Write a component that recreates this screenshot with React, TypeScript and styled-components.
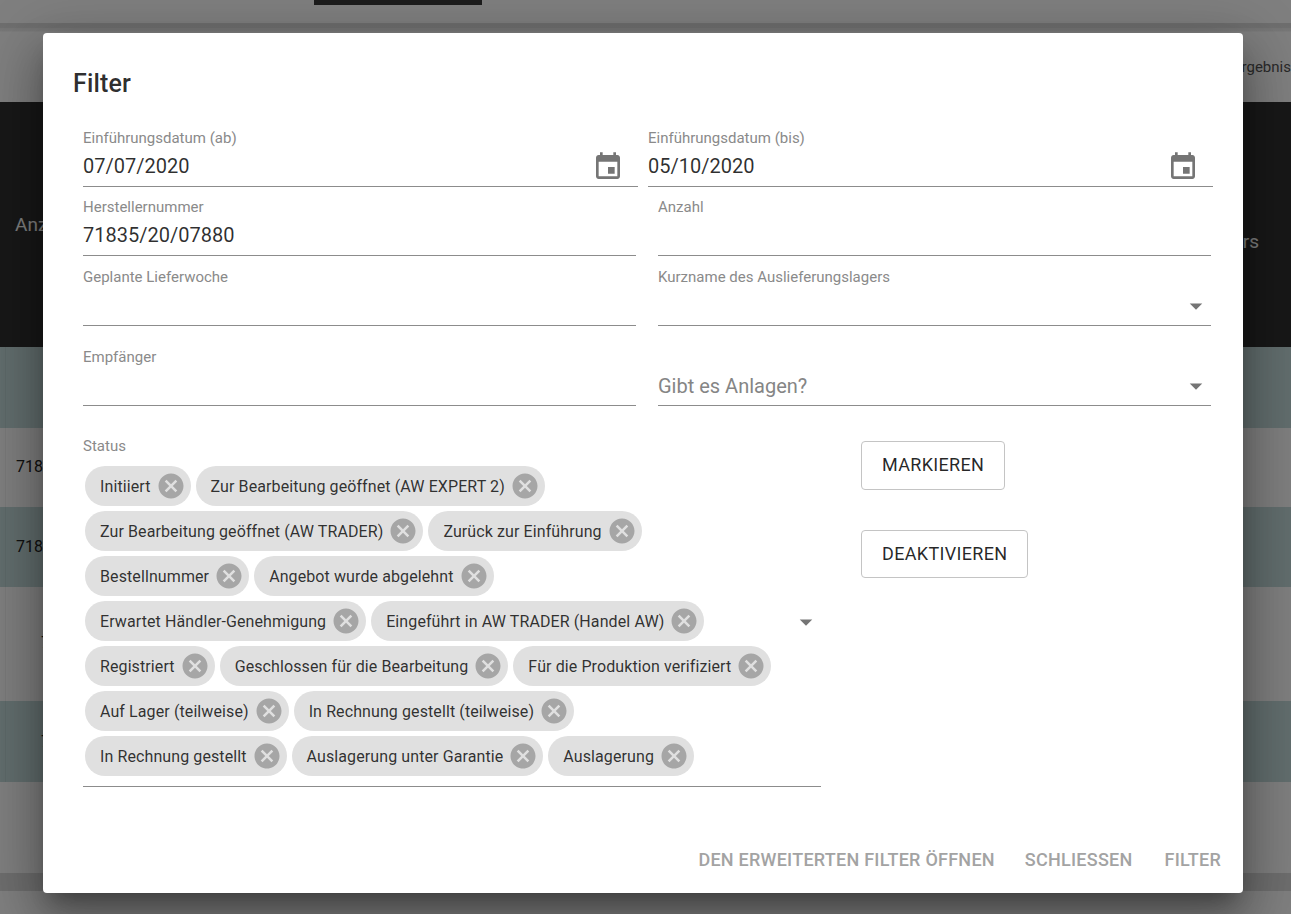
import React from "react";
import styled, { createGlobalStyle } from "styled-components";

const Global = createGlobalStyle`
  html, body { margin: 0; padding: 0; height: 914px; overflow: hidden; background: #fff; }
  * { box-sizing: border-box; }
  body { font-family: Roboto, "Liberation Sans", sans-serif; }
`;

const Page = styled.div`
  position: relative;
  width: 1291px;
  height: 914px;
  overflow: hidden;
  display: flex;
  flex-direction: column;
  background: #fff;
`;
const TopBar = styled.div`
  height: 23px;
  padding-left: 314px;
  background: #fff;
`;
const ActiveTab = styled.div`
  width: 168px;
  height: 5px;
  background: #383838;
`;
const Divider = styled.div`
  height: 9px;
  background: linear-gradient(#dcdcdc 0, #dedede 5px, #eaeaea 5px, #eeeeee 8px, #fff 9px);
`;
const ResultBar = styled.div`
  height: 70px;
  display: flex;
  align-items: center;
  padding: 0 0 0 1233px;
  overflow: hidden;
  font-size: 15px;
  color: #555;
  white-space: nowrap;
`;
const TableHead = styled.div`
  height: 245px;
  background: #303030;
  color: #fff;
  font-size: 19px;
  display: flex;
  justify-content: space-between;
  padding: 0 32px 0 15px;
`;
const HeadCell = styled.div<{ $top: number }>`
  padding-top: ${(p) => p.$top}px;
  white-space: nowrap;
`;
const TableRow = styled.div<{ $h: number; $tint?: boolean }>`
  height: ${(p) => p.$h}px;
  background: ${(p) => (p.$tint ? "#c4dcdd" : "#fff")};
  padding-left: 5px;
`;
const RowCell = styled.div<{ $indent: number; $lift: number }>`
  height: 100%;
  display: flex;
  align-items: center;
  padding: 0 0 ${(p) => p.$lift}px ${(p) => p.$indent}px;
  font-size: 16px;
  color: #222;
  border-left: 1px solid rgba(0, 0, 0, 0.05);
  white-space: nowrap;
`;
const RowFill = styled.div`
  height: 91px;
  background: #fff;
`;
const PageFooter = styled.div`
  height: 18px;
  background: #dcdcdc;
`;
const PageEnd = styled.div`
  flex: 1;
  background: #fff;
`;

const Backdrop = styled.div`
  position: absolute;
  inset: 0;
  background: rgba(0, 0, 0, 0.5);
  padding: 33px 0 0 43px;
`;
const Dialog = styled.div`
  width: 1200px;
  height: 860px;
  background: #fff;
  border-radius: 4px;
  display: flex;
  flex-direction: column;
  box-shadow: 0 14px 19px -9px rgba(0, 0, 0, 0.3), 0 30px 48px 4px rgba(0, 0, 0, 0.22),
    0 11px 58px 10px rgba(0, 0, 0, 0.18);
`;
const Title = styled.h2`
  margin: 0;
  padding: 35px 0 0 30px;
  height: 97px;
  font-size: 25px;
  line-height: 32px;
  letter-spacing: 0.15px;
  font-weight: 500;
  color: rgba(0, 0, 0, 0.82);
`;
const Form = styled.div`
  padding-left: 40px;
`;
const FormRow = styled.div<{ $cols: string; $gap: number; $top: number }>`
  display: grid;
  grid-template-columns: ${(p) => p.$cols};
  column-gap: ${(p) => p.$gap}px;
  margin-top: ${(p) => p.$top}px;
`;
const Field = styled.div`
  height: 57px;
  display: flex;
  flex-direction: column;
`;
const Label = styled.label`
  font-size: 15px;
  line-height: 16px;
  color: #8a8a8a;
`;
const InputLine = styled.div`
  margin-top: auto;
  height: 41px;
  border-bottom: 1px solid #8c8c8c;
  display: flex;
  align-items: center;
  justify-content: space-between;
`;
const Value = styled.span`
  font-size: 20px;
  color: rgba(0, 0, 0, 0.82);
`;
const Placeholder = styled.span`
  margin-top: 2px;
  font-size: 20px;
  color: #858585;
`;
const IconSlot = styled.span<{ $right: number }>`
  display: flex;
  margin: 2px ${(p) => p.$right}px 0 0;
  color: #757575;
`;

const StatusRow = styled.div`
  display: flex;
  gap: 40px;
  margin-top: 30px;
`;
const StatusField = styled.div`
  position: relative;
  width: 738px;
  height: 351px;
  border-bottom: 1px solid #8c8c8c;
`;
const ChipList = styled.div`
  margin-top: 11px;
  padding-left: 2px;
  width: 693px;
  display: flex;
  flex-wrap: wrap;
  gap: 5px;
`;
const Chip = styled.div`
  height: 40px;
  border-radius: 20px;
  background: #e0e0e0;
  display: flex;
  align-items: center;
  padding-left: 15px;
  padding-right: 5px;
  font-size: 16px;
  letter-spacing: 0.1px;
  color: rgba(0, 0, 0, 0.8);
  white-space: nowrap;
`;
const ChipRemove = styled.svg`
  width: 30px;
  height: 30px;
  margin-left: 5px;
  fill: #a6a6a6;
`;
const StatusArrow = styled.span`
  position: absolute;
  right: 0;
  top: 171px;
  display: flex;
  color: #757575;
`;
const ActionColumn = styled.div`
  display: flex;
  flex-direction: column;
  align-items: flex-start;
  gap: 40px;
  padding-top: 5px;
`;
const OutlineButton = styled.button<{ $h: number }>`
  height: ${(p) => p.$h}px;
  padding: 0 20px 2px;
  background: #fff;
  border: 1px solid #c4c4c4;
  border-radius: 4px;
  font-family: inherit;
  font-size: 18px;
  font-weight: 400;
  letter-spacing: 0.33px;
  color: rgba(0, 0, 0, 0.85);
`;
const Footer = styled.div`
  margin-top: auto;
  height: 44px;
  padding: 0 22px 0 0;
  display: flex;
  justify-content: flex-end;
  align-items: flex-start;
`;
const FooterButton = styled.span<{ $left: number }>`
  margin-left: ${(p) => p.$left}px;
  font-size: 18px;
  line-height: 22px;
  letter-spacing: 0.25px;
  font-weight: 500;
  color: #a3a3a3;
  white-space: nowrap;
`;

const CalendarIcon = () => (
  <svg width="32" height="32" viewBox="0 0 24 24" fill="currentColor">
    <path d="M17 12h-5v5h5v-5zM16 1v2H8V1H6v2H5c-1.11 0-1.99.9-1.99 2L3 19c0 1.1.89 2 2 2h14c1.1 0 2-.9 2-2V5c0-1.1-.9-2-2-2h-1V1h-2zm3 18H5V8h14v11z" />
  </svg>
);
const ArrowIcon = () => (
  <svg width="30" height="30" viewBox="0 0 24 24" fill="currentColor">
    <path d="M7 10l5 5 5-5z" />
  </svg>
);

const statuses = [
  "Initiiert",
  "Zur Bearbeitung geöffnet (AW EXPERT 2)",
  "Zur Bearbeitung geöffnet (AW TRADER)",
  "Zurück zur Einführung",
  "Bestellnummer",
  "Angebot wurde abgelehnt",
  "Erwartet Händler-Genehmigung",
  "Eingeführt in AW TRADER (Handel AW)",
  "Registriert",
  "Geschlossen für die Bearbeitung",
  "Für die Produktion verifiziert",
  "Auf Lager (teilweise)",
  "In Rechnung gestellt (teilweise)",
  "In Rechnung gestellt",
  "Auslagerung unter Garantie",
  "Auslagerung",
];

export default function App() {
  return (
    <Page>
      <Global />
      <TopBar>
        <ActiveTab />
      </TopBar>
      <Divider />
      <ResultBar>Ergebnisse</ResultBar>
      <TableHead>
        <HeadCell $top={111}>Anzahl</HeadCell>
        <HeadCell $top={128}>Lagers</HeadCell>
      </TableHead>
      <TableRow $h={81} $tint><RowCell $indent={10} $lift={0} /></TableRow>
      <TableRow $h={79}><RowCell $indent={10} $lift={2}>71835/20/07880</RowCell></TableRow>
      <TableRow $h={80} $tint><RowCell $indent={10} $lift={2}>71835/20/07880</RowCell></TableRow>
      <TableRow $h={114}><RowCell $indent={35} $lift={4}>71835</RowCell></TableRow>
      <TableRow $h={81} $tint><RowCell $indent={35} $lift={1}>71835</RowCell></TableRow>
      <RowFill />
      <PageFooter />
      <PageEnd />
      <Backdrop>
        <Dialog>
          <Title>Filter</Title>
          <Form>
            <FormRow $cols="555px 565px" $gap={10} $top={0}>
              <Field>
                <Label>Einführungsdatum (ab)</Label>
                <InputLine>
                  <Value>07/07/2020</Value>
                  <IconSlot $right={14}><CalendarIcon /></IconSlot>
                </InputLine>
              </Field>
              <Field>
                <Label>Einführungsdatum (bis)</Label>
                <InputLine>
                  <Value>05/10/2020</Value>
                  <IconSlot $right={14}><CalendarIcon /></IconSlot>
                </InputLine>
              </Field>
            </FormRow>
            <FormRow $cols="553px 553px" $gap={22} $top={12}>
              <Field>
                <Label>Herstellernummer</Label>
                <InputLine><Value>71835/20/07880</Value></InputLine>
              </Field>
              <Field>
                <Label>Anzahl</Label>
                <InputLine />
              </Field>
            </FormRow>
            <FormRow $cols="553px 553px" $gap={22} $top={13}>
              <Field>
                <Label>Geplante Lieferwoche</Label>
                <InputLine />
              </Field>
              <Field>
                <Label>Kurzname des Auslieferungslagers</Label>
                <InputLine>
                  <span />
                  <IconSlot $right={0}><ArrowIcon /></IconSlot>
                </InputLine>
              </Field>
            </FormRow>
            <FormRow $cols="553px 553px" $gap={22} $top={23}>
              <Field>
                <Label>Empfänger</Label>
                <InputLine />
              </Field>
              <Field>
                <InputLine>
                  <Placeholder>Gibt es Anlagen?</Placeholder>
                  <IconSlot $right={0}><ArrowIcon /></IconSlot>
                </InputLine>
              </Field>
            </FormRow>
            <StatusRow>
              <StatusField>
                <Label>Status</Label>
                <ChipList>
                  {statuses.map((s) => (
                    <Chip key={s}>
                      {s}
                      <ChipRemove viewBox="0 0 24 24">
                        <path d="M12 2C6.47 2 2 6.47 2 12s4.47 10 10 10 10-4.47 10-10S17.53 2 12 2zm5 13.59L15.59 17 12 13.41 8.41 17 7 15.59 10.59 12 7 8.41 8.41 7 12 10.59 15.59 7 17 8.41 13.41 12 17 15.59z" />
                      </ChipRemove>
                    </Chip>
                  ))}
                </ChipList>
                <StatusArrow><ArrowIcon /></StatusArrow>
              </StatusField>
              <ActionColumn>
                <OutlineButton $h={49}>MARKIEREN</OutlineButton>
                <OutlineButton $h={48}>DEAKTIVIEREN</OutlineButton>
              </ActionColumn>
            </StatusRow>
          </Form>
          <Footer>
            <FooterButton $left={0}>DEN ERWEITERTEN FILTER ÖFFNEN</FooterButton>
            <FooterButton $left={30}>SCHLIESSEN</FooterButton>
            <FooterButton $left={32}>FILTER</FooterButton>
          </Footer>
        </Dialog>
      </Backdrop>
    </Page>
  );
}
